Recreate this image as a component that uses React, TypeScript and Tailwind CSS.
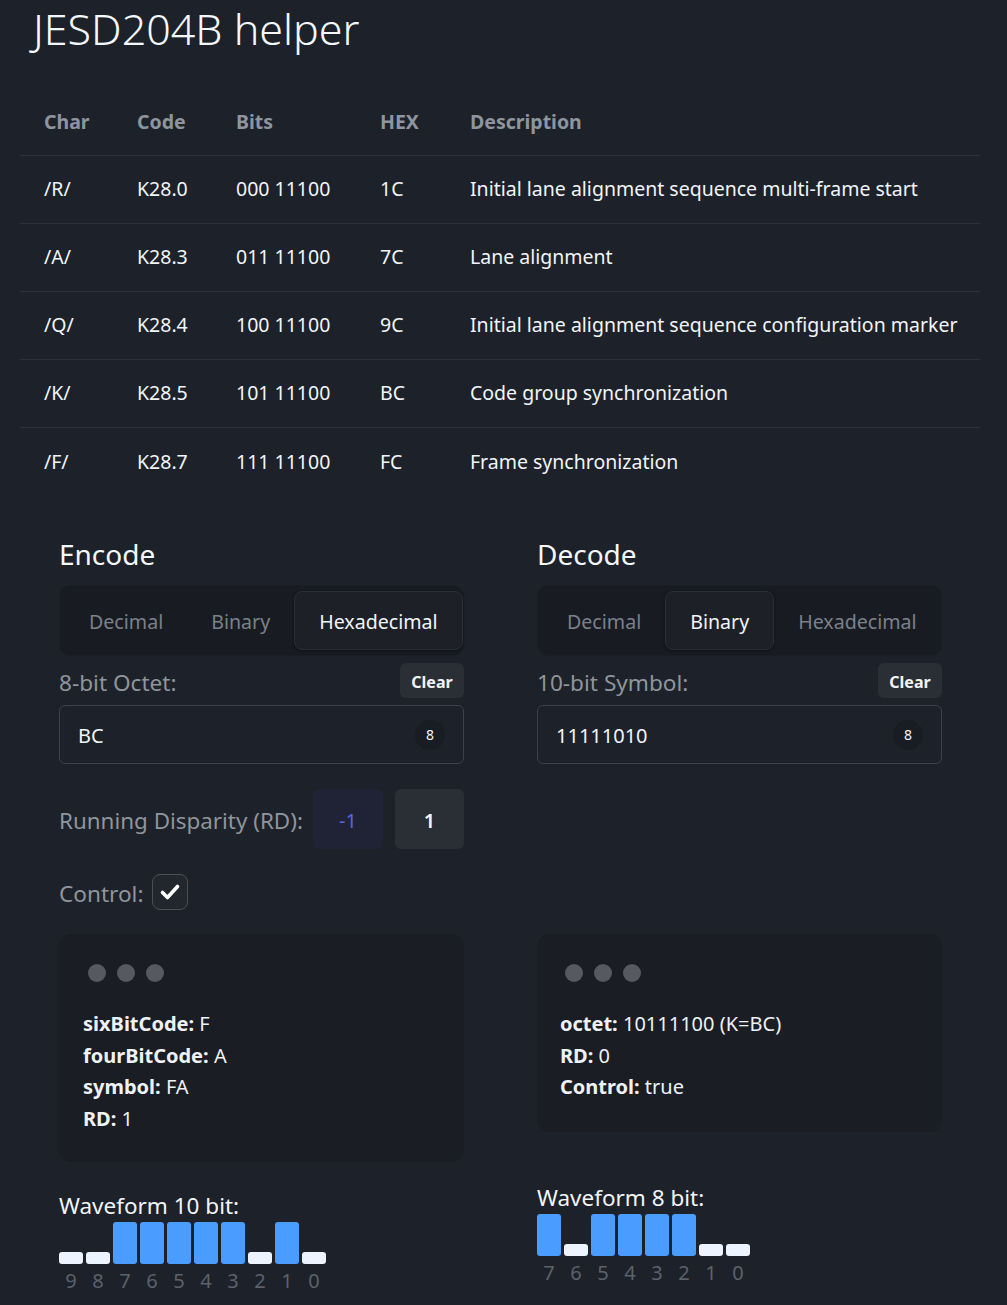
import React from "react";

const rows = [
  { ch: "/R/", code: "K28.0", bits: "000 11100", hex: "1C", desc: "Initial lane alignment sequence multi-frame start" },
  { ch: "/A/", code: "K28.3", bits: "011 11100", hex: "7C", desc: "Lane alignment" },
  { ch: "/Q/", code: "K28.4", bits: "100 11100", hex: "9C", desc: "Initial lane alignment sequence configuration marker" },
  { ch: "/K/", code: "K28.5", bits: "101 11100", hex: "BC", desc: "Code group synchronization" },
  { ch: "/F/", code: "K28.7", bits: "111 11100", hex: "FC", desc: "Frame synchronization" },
];

function Tabs({ active }: { active: number }) {
  const labels = ["Decimal", "Binary", "Hexadecimal"];
  return (
    <div className="flex h-[71px] items-stretch rounded-xl bg-[#181b21] p-[6px] shadow-[inset_0_0_0_1px_#1b1f25]">
      {labels.map((l, i) =>
        i === active ? (
          <div key={l} className="flex items-center rounded-lg border border-[#2a2e35] bg-[#1d2027] px-6 pt-[3px] text-[19.6px] text-[#f1f5f9] shadow-[0_1px_3px_rgba(0,0,0,0.4)]">
            {l}
          </div>
        ) : (
          <div key={l} className="flex items-center px-6 pt-[3px] text-[19.6px] text-[#7b8189]">
            {l}
          </div>
        )
      )}
    </div>
  );
}

function LabelRow({ label }: { label: string }) {
  return (
    <div className="mt-[7px] flex h-[35px] items-center justify-between">
      <span className="pt-[4px] text-[22.6px] text-[#8f959c]">{label}</span>
      <button className="h-[35px] w-[64px] rounded-md bg-[#2a2e35] pt-[2px] text-[16px] font-bold text-[#f1f5f9]">Clear</button>
    </div>
  );
}

function InputBox({ value }: { value: string }) {
  return (
    <div className="mt-[7px] flex h-[59px] items-center justify-between rounded-md border border-[#3d424a] pl-[18px] pr-[18px]">
      <span className="pt-[2px] text-[20px] text-[#f1f5f9]">{value}</span>
      <span className="flex h-[30px] w-[30px] items-center justify-center rounded-full bg-[#191c22] text-[14px] text-[#f1f5f9]">8</span>
    </div>
  );
}

function Dots() {
  return (
    <div className="ml-[5px] flex gap-[11px]">
      <span className="h-[18px] w-[18px] rounded-full bg-[#56595f]" />
      <span className="h-[18px] w-[18px] rounded-full bg-[#56595f]" />
      <span className="h-[18px] w-[18px] rounded-full bg-[#56595f]" />
    </div>
  );
}

function Waveform({ label, bits }: { label: string; bits: number[] }) {
  const n = bits.length;
  return (
    <div>
      <div className="text-[22.5px] leading-[30px] text-[#f1f5f9]">{label}</div>
      <div className="mt-[1px] flex h-[42px] items-end gap-[3px]">
        {bits.map((b, i) =>
          b ? (
            <div key={i} className="h-[42px] w-[24px] rounded-[3px] bg-[#4a9dff]" />
          ) : (
            <div key={i} className="h-[12px] w-[24px] rounded-[3px] bg-[#eef4ff]" />
          )
        )}
      </div>
      <div className="flex gap-[3px]">
        {bits.map((_, i) => (
          <div key={i} className="w-[24px] text-center text-[20px] leading-[34px] text-[#5b626c]">
            {n - 1 - i}
          </div>
        ))}
      </div>
    </div>
  );
}

export default function App() {
  return (
    <div className="min-h-[1305px] bg-[#1d2129] text-[#f1f5f9]" style={{ fontFamily: '"Noto Sans", "Open Sans", sans-serif' }}>
      <h1 className="pl-[33px] text-[43px] font-light leading-[58px] text-[#f4f8fc]">JESD204B helper</h1>

      <table className="mx-[20px] mt-[29px] w-[960px] table-fixed border-collapse text-[19.5px]">
        <colgroup>
          <col className="w-[93px]" />
          <col className="w-[99px]" />
          <col className="w-[144px]" />
          <col className="w-[90px]" />
          <col />
        </colgroup>
        <thead>
          <tr className="h-[68px] border-b border-[#2b3039]">
            {["Char", "Code", "Bits", "HEX", "Description"].map((h) => (
              <th key={h} className="pl-[24px] pt-[2px] text-left font-bold text-[#8e959e]">
                {h}
              </th>
            ))}
          </tr>
        </thead>
        <tbody>
          {rows.map((r, i) => (
            <tr key={r.ch} className={"h-[68px] " + (i < rows.length - 1 ? "border-b border-[#2b3039]" : "")}>
              <td className="pl-[24px] font-normal">{r.ch}</td>
              <td className="pl-[24px]">{r.code}</td>
              <td className="pl-[24px]">{r.bits}</td>
              <td className="pl-[24px]">{r.hex}</td>
              <td className="whitespace-nowrap pl-[24px]">{r.desc}</td>
            </tr>
          ))}
        </tbody>
      </table>

      <div className="ml-[59px] mt-[40px] grid w-[883px] grid-cols-[405px_405px] gap-x-[73px]">
        {/* Encode column */}
        <div className="flex flex-col">
          <h2 className="text-[28px] leading-[38px] text-[#f4f8fc]">Encode</h2>
          <div className="mt-[12px]">
            <Tabs active={2} />
          </div>
          <LabelRow label="8-bit Octet:" />
          <InputBox value="BC" />
          <div className="mt-[25px] flex h-[60px] items-center">
            <span className="whitespace-nowrap pt-[3px] text-[22.4px] text-[#8f959c]">Running Disparity (RD):</span>
            <button className="ml-auto h-[60px] w-[70px] shrink-0 rounded-md bg-[#1f2335] pt-[4px] text-[20px] text-[#5b5ff0]">-1</button>
            <button className="ml-[12px] h-[60px] w-[69px] shrink-0 rounded-md bg-[#2a2e35] pt-[4px] text-[20px] font-semibold text-[#f1f5f9]">1</button>
          </div>
          <div className="mt-[25px] flex h-[36px] items-center">
            <span className="pt-[3px] text-[22.6px] text-[#8f959c]">Control:</span>
            <span className="ml-[8px] flex h-[36px] w-[36px] items-center justify-center rounded-lg border border-[#4a4f57] bg-[#22262d]">
              <svg width="24" height="24" viewBox="0 0 24 24" fill="none" stroke="#ffffff" strokeWidth="3.6" strokeLinecap="round" strokeLinejoin="round">
                <path d="M4.5 12.5l5 5 10-11" />
              </svg>
            </span>
          </div>
          <div className="mt-[24px] rounded-xl bg-[#1a1d23] px-[24px] pb-[27px] pt-[30px]">
            <Dots />
            <div className="mt-[26px] text-[20px] leading-[31.7px] text-[#eef2f6]">
              <div><b>sixBitCode:</b> F</div>
              <div><b>fourBitCode:</b> A</div>
              <div><b>symbol:</b> FA</div>
              <div><b>RD:</b> 1</div>
            </div>
          </div>
          <div className="mt-[29px]">
            <Waveform label="Waveform 10 bit:" bits={[0, 0, 1, 1, 1, 1, 1, 0, 1, 0]} />
          </div>
        </div>

        {/* Decode column */}
        <div className="flex flex-col">
          <h2 className="text-[28px] leading-[38px] text-[#f4f8fc]">Decode</h2>
          <div className="mt-[12px]">
            <Tabs active={1} />
          </div>
          <LabelRow label="10-bit Symbol:" />
          <InputBox value="11111010" />
          <div className="mt-[25px] h-[60px]" />
          <div className="mt-[25px] h-[36px]" />
          <div className="mt-[24px] rounded-xl bg-[#1a1d23] px-[23px] pb-[29px] pt-[30px]">
            <Dots />
            <div className="mt-[26px] text-[20px] leading-[31.7px] text-[#eef2f6]">
              <div><b>octet:</b> 10111100 (K=BC)</div>
              <div><b>RD:</b> 0</div>
              <div><b>Control:</b> true</div>
            </div>
          </div>
          <div className="mt-[51px]">
            <Waveform label="Waveform 8 bit:" bits={[1, 0, 1, 1, 1, 1, 0, 0]} />
          </div>
        </div>
      </div>
    </div>
  );
}
